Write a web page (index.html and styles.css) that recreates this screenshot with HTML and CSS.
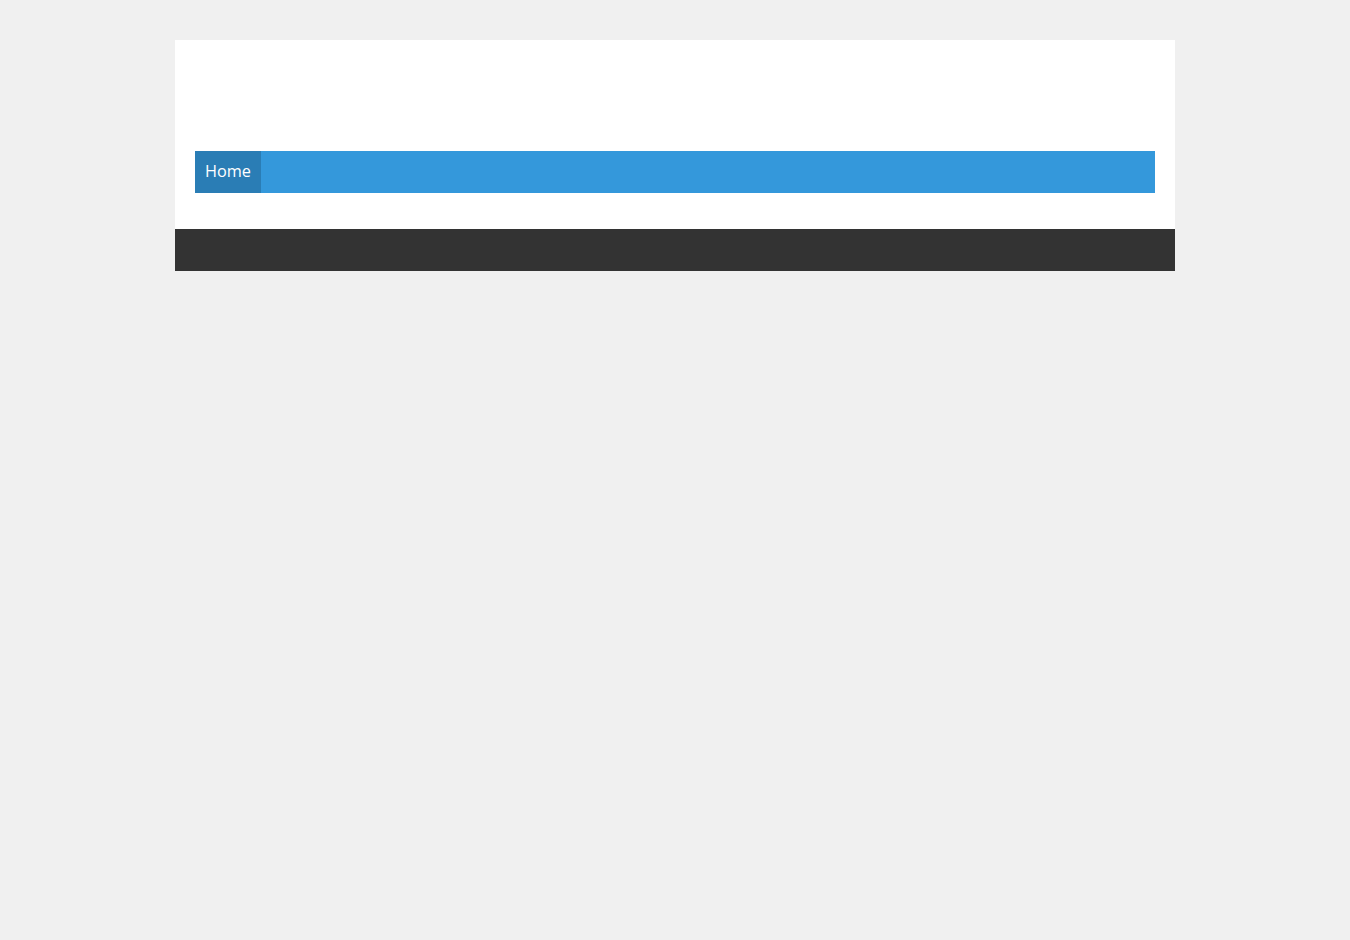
FILE: index.html
```html
<!DOCTYPE html>
<html lang="en">
<head>
  <meta charset="UTF-8">
  <title>Home</title>
  <meta name="viewport" content="width=device-width, initial-scale=1">
  <link rel="stylesheet" href="styles.css">
</head>
<body>
  <div class="wrapper">
    <div class="header">
      <div class="branding"></div>
      <div class="nav">
        <a class="nav-item active" href="#">Home</a>
      </div>
    </div>
    <div class="footer-bar"></div>
  </div>
</body>
</html>
```

FILE: styles.css
```css
body { margin: 0; padding: 0; background: #f0f0f0; font-family: "Open Sans", "DejaVu Sans", sans-serif; }
.wrapper { width: 1000px; margin: 40px auto 0; }
.header { background: #fff; padding: 20px 20px 36px; }
.branding { height: 91px; }
.nav { display: flex; height: 42px; background: #3498db; }
.nav-item { display: flex; align-items: center; padding: 0 10px 2px; background: #2a7db5; color: #fff; text-decoration: none; font-size: 16.3px; }
.footer-bar { height: 42px; background: #333; }
```
